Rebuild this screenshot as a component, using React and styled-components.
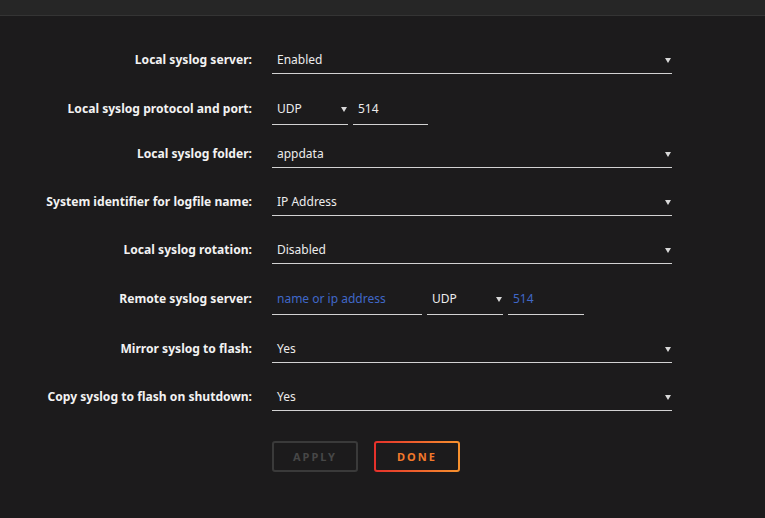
import styled, { createGlobalStyle } from "styled-components";

const GlobalStyle = createGlobalStyle`
  html, body {
    margin: 0;
    background: #1c1b1c;
  }
  body {
    font-family: "Noto Sans", "Liberation Sans", sans-serif;
  }
`;

// shift = how far the row sits off the 48px grid, tall = rows with text inputs
const rows = [
  { label: "Local syslog server:", fields: [{ kind: "select", value: "Enabled", width: 400 }] },
  {
    label: "Local syslog protocol and port:",
    shift: 1,
    tall: true,
    fields: [
      { kind: "select", value: "UDP", width: 76 },
      { kind: "input", value: "514", width: 75 },
    ],
  },
  { label: "Local syslog folder:", shift: -2, fields: [{ kind: "select", value: "appdata", width: 400 }] },
  { label: "System identifier for logfile name:", shift: -2, fields: [{ kind: "select", value: "IP Address", width: 400 }] },
  { label: "Local syslog rotation:", shift: -2, fields: [{ kind: "select", value: "Disabled", width: 400 }] },
  {
    label: "Remote syslog server:",
    shift: -1,
    tall: true,
    fields: [
      { kind: "input", value: "name or ip address", width: 150, hint: true },
      { kind: "select", value: "UDP", width: 76 },
      { kind: "input", value: "514", width: 76, hint: true },
    ],
  },
  { label: "Mirror syslog to flash:", shift: 1, fields: [{ kind: "select", value: "Yes", width: 400 }] },
  { label: "Copy syslog to flash on shutdown:", shift: 1, fields: [{ kind: "select", value: "Yes", width: 400 }] },
];

const App = () => {
  return (
    <>
      <GlobalStyle />
      <TopBar />
      <Form>
        {rows.map((row) => (
          <Row key={row.label}>
            <Line $shift={row.shift || 0} $tall={row.tall}>
              <Label>{row.label}</Label>
              <Fields>
                {row.fields.map((f, i) =>
                  f.kind === "select" ? (
                    <Select key={i} $width={f.width} $tall={row.tall}>
                      <Value>{f.value}</Value>
                      <Arrow />
                    </Select>
                  ) : (
                    <Input key={i} $width={f.width} $tall={row.tall} $hint={f.hint}>
                      {f.value}
                    </Input>
                  )
                )}
              </Fields>
            </Line>
          </Row>
        ))}
        <Buttons>
          <ApplyButton>Apply</ApplyButton>
          <DoneButton>Done</DoneButton>
        </Buttons>
      </Form>
    </>
  );
};

export default App;

// thin strip at the top of the panel
const TopBar = styled.div`
  height: 15px;
  background: #262626;
  border-bottom: 1px solid #343434;
`;

const Form = styled.div`
  padding-top: 30px;
  display: flex;
  flex-direction: column;
`;

// every setting takes the same 48px slot
const Row = styled.div`
  height: 48px;
`;

const Line = styled.div`
  display: flex;
  align-items: flex-start;
  margin-top: ${(p) => p.$shift}px;
`;

const Label = styled.div`
  width: 252px;
  padding-right: 20px;
  box-sizing: content-box;
  text-align: right;
  color: #f2f2f2;
  font-size: 12.1px;
  font-weight: 700;
  white-space: nowrap;
  line-height: 28px;
`;

const Fields = styled.div`
  display: flex;
  gap: 5px;
`;

const Field = styled.div`
  position: relative;
  width: ${(p) => p.$width}px;
  height: ${(p) => (p.$tall ? 30 : 28)}px;
  padding: 0 5px ${(p) => (p.$tall ? 2 : 0)}px;
  box-sizing: border-box;
  border-bottom: 1px solid #d2d2d2;
  display: flex;
  align-items: center;
  font-size: 12px;
`;

const Select = styled(Field)`
  color: #ececec;
`;

const Value = styled.span``;

const Arrow = styled.span`
  position: absolute;
  right: 1px;
  top: 12px;
  width: 0;
  height: 0;
  border-left: 3px solid transparent;
  border-right: 3px solid transparent;
  border-top: 5px solid #d8d8d8;
`;

const Input = styled(Field)`
  color: ${(p) => (p.$hint ? "#4068c8" : "#ececec")};
`;

const Buttons = styled.div`
  display: flex;
  gap: 16px;
  padding-left: 272px;
  margin-top: 11px;
`;

const Button = styled.button`
  width: 86px;
  height: 31px;
  border-radius: 3px;
  font-family: "Noto Sans", "Liberation Sans", sans-serif;
  font-size: 11px;
  font-weight: 700;
  letter-spacing: 2px;
  text-transform: uppercase;
  cursor: pointer;
`;

const ApplyButton = styled(Button)`
  background: transparent;
  border: 2px solid #3a3a3a;
  color: #474747;
`;

const DoneButton = styled(Button)`
  border: 2px solid transparent;
  background:
    linear-gradient(#1c1b1c, #1c1b1c) padding-box,
    linear-gradient(90deg, #e5302b, #f7922e) border-box;
  color: #f2792b;
`;
